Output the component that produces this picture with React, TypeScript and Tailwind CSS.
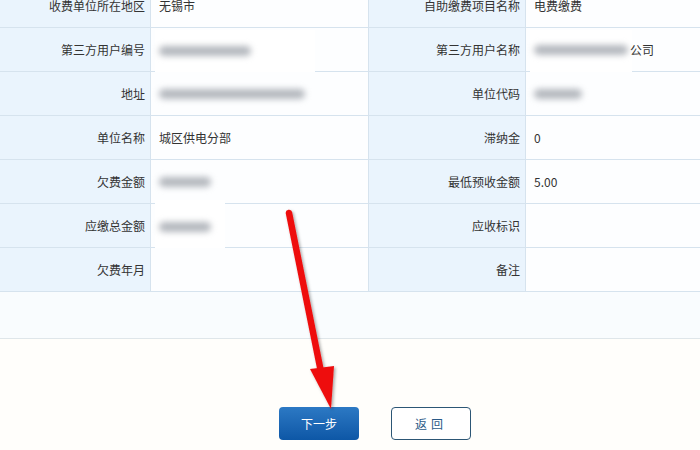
import React from "react";

const Blur = ({ w, className = "" }: { w: number; className?: string }) => (
  <span
    className={`inline-block h-[10px] rounded-full bg-[#b4b8be] blur-[3px] align-middle ${className}`}
    style={{ width: w }}
  />
);

type Cell = { label: string; value?: React.ReactNode };

const rows: [Cell, Cell][] = [
  [
    { label: "收费单位所在地区", value: "无锡市" },
    { label: "自助缴费项目名称", value: "电费缴费" },
  ],
  [
    {
      label: "第三方用户编号",
      value: (
        <>
          <span className="absolute left-[4px] top-[2px] h-[46px] w-[160px] bg-white" />
          <span className="relative"><Blur w={92} /></span>
        </>
      ),
    },
    {
      label: "第三方用户名称",
      value: (
        <>
          <span className="absolute left-[4px] top-[2px] h-[46px] w-[102px] bg-white" />
          <span className="relative flex items-center">
            <Blur w={94} className="mr-[2px]" />
            <span>公司</span>
          </span>
        </>
      ),
    },
  ],
  [
    { label: "地址", value: <Blur w={146} /> },
    { label: "单位代码", value: <Blur w={48} /> },
  ],
  [
    { label: "单位名称", value: "城区供电分部" },
    { label: "滞纳金", value: "0" },
  ],
  [
    { label: "欠费金额", value: <Blur w={52} /> },
    { label: "最低预收金额", value: "5.00" },
  ],
  [
    {
      label: "应缴总金额",
      value: (
        <>
          <span className="absolute left-[4px] top-[-4px] h-[50px] w-[70px] bg-white" />
          <span className="relative"><Blur w={52} /></span>
        </>
      ),
    },
    { label: "应收标识" },
  ],
  [{ label: "欠费年月" }, { label: "备注" }],
];

export default function App() {
  return (
    <div
      className="relative h-[450px] w-[700px] overflow-hidden bg-[#fffefb] text-[12px] text-[#333]"
      style={{ fontFamily: '"Noto Sans CJK SC", "Microsoft YaHei", sans-serif' }}
    >
      <div className="mt-[-16px]">
        <div className="grid grid-cols-[151px_217px_158px_1fr]">
          {rows.map((pair, i) => (
            <React.Fragment key={i}>
              {pair.map((c, j) => (
                <React.Fragment key={j}>
                  <div
                    className={`flex h-[44px] items-center justify-end border-b border-[#d6e3ee] bg-[#eaf4fd] pr-[5px] ${
                      j === 1 ? "border-l" : ""
                    } border-r`}
                  >
                    {c.label}
                  </div>
                  <div className="relative flex h-[44px] items-center border-b border-[#d6e3ee] bg-[#fdfeff] pl-[8px]">
                    {c.value}
                  </div>
                </React.Fragment>
              ))}
            </React.Fragment>
          ))}
        </div>
        <div className="h-[47px] border-b border-[#dfe6ea] bg-[#f9fcfe]" />
      </div>

      <div className="mt-[68px] flex gap-[32px] pl-[279px]">
        <button className="h-[33px] w-[80px] rounded-[4px] bg-gradient-to-b from-[#2c79c4] to-[#0d57a6] text-[12px] text-white">
          下一步
        </button>
        <button className="h-[33px] w-[80px] rounded-[4px] border border-[#2c5675] bg-white text-[12px] tracking-[4px] text-[#2a5a88]">
          返回
        </button>
      </div>

      <svg className="pointer-events-none absolute left-0 top-0" width="700" height="450">
        <defs>
          <filter id="sh" x="-50%" y="-50%" width="200%" height="200%">
            <feDropShadow dx="1.5" dy="1.5" stdDeviation="1.5" floodColor="#000" floodOpacity="0.35" />
          </filter>
        </defs>
        <g filter="url(#sh)">
          <line x1="289" y1="213" x2="321" y2="372" stroke="#ee1111" strokeWidth="6.5" strokeLinecap="round" />
          <polygon points="310,369 334,366 331,409" fill="#ee1111" />
        </g>
      </svg>
    </div>
  );
}
